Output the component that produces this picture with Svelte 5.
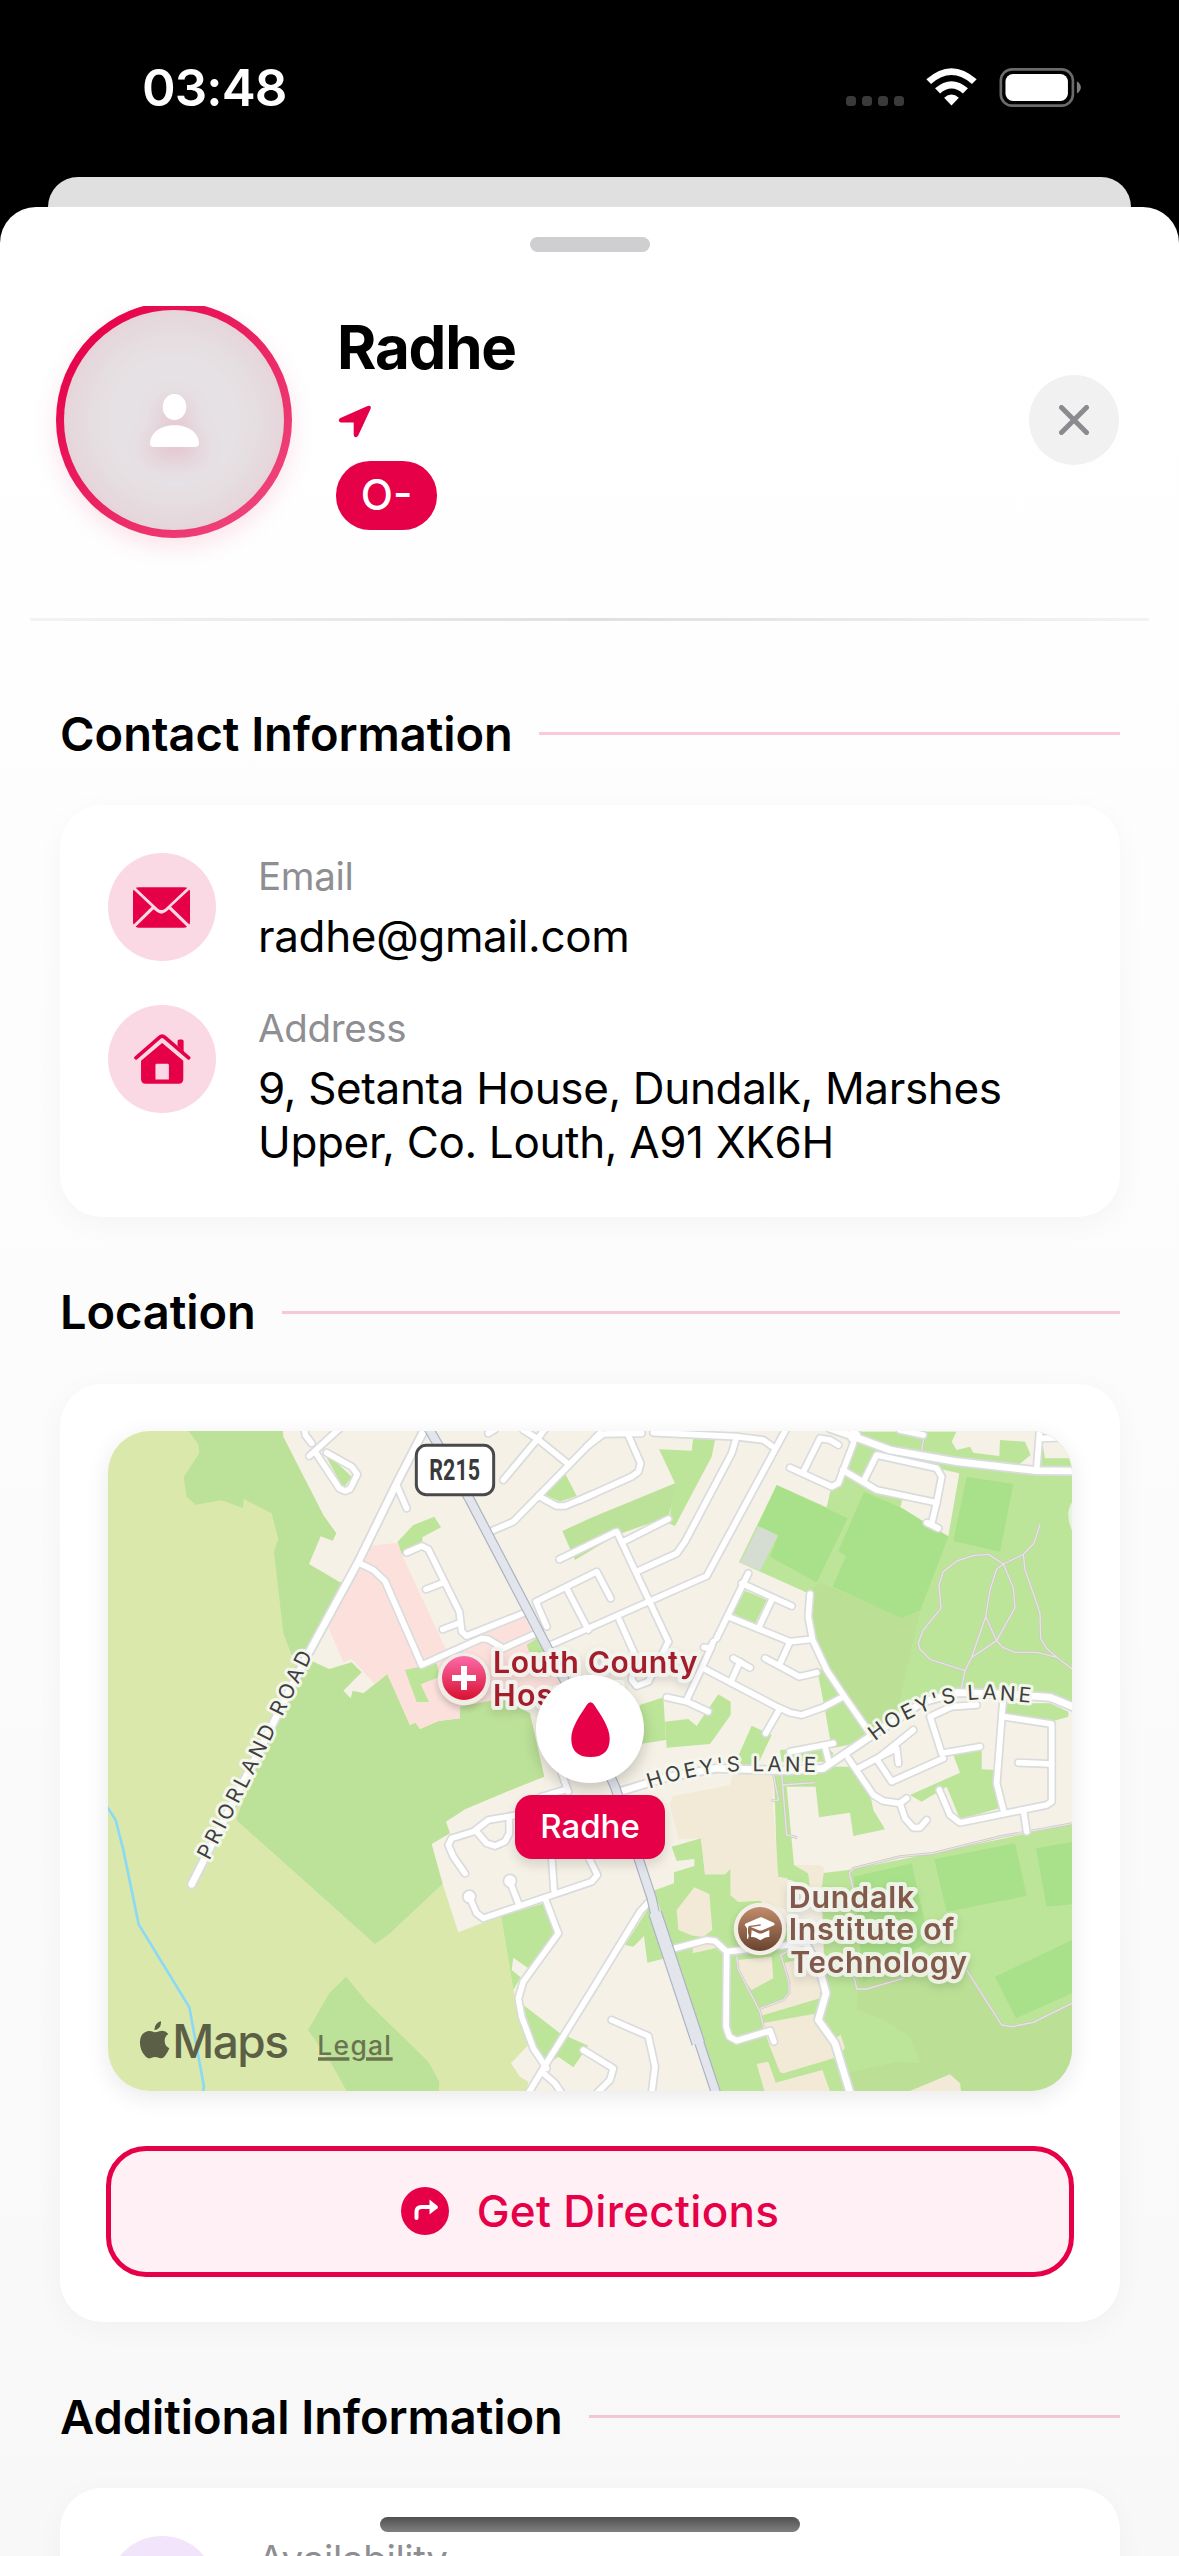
<script>
  // Map drawing units: three per CSS pixel.
  const meadow =
    'M24 33H300L560 300L575 705L640 725L408 1200L825 1573L865 1545L1028 1392L1075 1537L1203 1487L1240 1710L1290 1870L1233 1930L1260 1970L1285 1985L1280 2013H24Z';

  const fields = [
    'M265 33L295 72L298 100L251 172L260 230L287 254L365 241L429 264L431 237L515 280L535 357L522 395L550 640L575 705L620 715L740 480L720 487L627 432L662 349L698 362L709 340L670 285L550 50L549 33Z',
    'M600 705L640 725L688 747L755 727L785 757L730 812L752 835L758 812L790 820L862 762L930 915L947 908L960 927L1015 903L1080 895V855L1200 830L1290 880L1333 1070L1220 1115L1095 1168L1038 1205L1050 1240L995 1272L1028 1392L865 1545L825 1573L408 1200Z',
    'M738 1670L800 1745L985 1925L1018 1985L1016 2013H740L688 1920L624 1830L688 1720Z',
    'M1387 333L1470 295L1725 190L1732 200L1705 290L1550 345L1425 420Z'
  ];

  const parks = [
    'M893 365L940 315L1003 290L1023 322L967 352V370L905 403Z',
    'M665 85L755 170L730 205Z',
    'M1395 160L1430 228L1380 245L1335 225Z',
    'M1677 88L1775 92L1780 52L1845 60L1835 110L1725 318L1705 310L1710 285L1725 190Z',
    'M2270 35H2920V865L2850 832L2710 820L2570 815L2470 845L2310 945L2230 825L2180 750L2138 650L2125 520L1917 427L2030 195L2180 262L2192 210L2228 150L2260 70Z',
    'M1935 512L2000 540L1965 612L1898 580Z',
    'M2150 742L2190 765L2300 940L2270 970L2195 985L2175 870Z',
    'M1620 855L1690 832L1698 960L1600 975Z',
    'M1695 905L1765 897L1790 918L1855 823L1892 845V885L1830 972L1700 983Z',
    'M1955 917L2015 945L1970 1040L1905 1030Z',
    'M2040 990L2180 980L2200 1000L2190 1025L2045 1025Z',
    'M2715 850H2850L2905 875V890L2860 903L2715 885Z',
    'M2560 1005L2645 985V1048L2688 1050L2697 1165L2580 1198L2540 1100L2465 1145L2430 1125L2580 1058Z',
    'M1203 1487L1332 1450L1375 1540L1285 1645L1240 1613L1235 1650L1262 1672L1240 1710Z',
    'M1270 1755L1380 1840L1465 1877L1420 1942L1375 1910L1340 1935L1300 1880Z',
    'M1715 1280L1803 1255L1815 1363H1875L1892 1345V1425L1915 1445L1980 1442L2070 1520L2170 1620L2200 1720L2290 1700V2013H1858L1720 1590L1675 1450L1660 1412L1722 1390V1357L1783 1338V1317L1730 1323Z',
    'M1575 1575L1645 1465H1660L1715 1610L1642 1628L1632 1548L1600 1580Z',
    'M2022 1060L2060 1100L2082 1335L2125 1360L2130 1400L2070 1380L2032 1372Z',
    'M2022 1060L2040 1040H2260L2310 1120L2320 1170L2355 1228L2260 1248L2250 1178L2157 1192L2147 1100H2060Z',
    'M2163 1360L2245 1350L2470 1305L2690 1260L2920 1210V2013H2240L2190 1780L2175 1700Z'
  ];

  const shade = [
    'M2160 487L2405 595L2460 575L2395 860L2310 945L2230 825L2138 650L2125 520Z',
    'M2275 1660H2600L2705 1818L2800 1810L2920 1750V2013H2250L2240 1960L2390 1925L2460 1930L2430 1850L2340 1795L2270 1770Z'
  ];

  const pitches = [
    'M2030 195L2243 295L2150 487L2010 410L2035 345L1973 318Z',
    'M2292 215L2407 265L2545 350L2460 572L2405 595L2198 500L2238 408L2215 393Z',
    'M2600 170L2740 192L2700 395L2560 363Z',
    'M2260 1370L2435 1330L2480 1530L2510 1550L2290 1685Z',
    'M2503 1318L2745 1270L2780 1428L2540 1475Z',
    'M2808 1285L2920 1265V1452L2840 1460Z',
    'M2685 1670L2920 1558V1718L2748 1795Z'
  ];

  const town = [
    'M2290 190L2330 105L2510 145L2578 160L2545 348L2400 265L2407 240L2330 215Z',
    'M2570 33L2555 65L2570 90L2610 80L2620 98L2698 108L2700 60L2775 65L2792 105L2755 135L2810 148L2815 33Z',
    'M2825 55H2920V115H2835Z'
  ];

  const campus = [
    'M1710 1150L1720 1128L1890 1095L1900 1050L2025 1045L2018 1140L2035 1370L2062 1375L2060 1470L1975 1440L1915 1445L1892 1425V1345L1875 1363H1815L1803 1255L1735 1258Z',
    'M1783 1402L1828 1422L1837 1530L1810 1550L1778 1547L1735 1530L1730 1470Z',
    'M1780 1560L1840 1555L1865 1580L1778 1600Z',
    'M1910 1620L2015 1610L2020 1675L1955 1710L1920 1665Z',
    'M2050 1630L2160 1600V1735L1980 1788L1975 1765L2055 1735L2068 1710Z',
    'M1985 1810L2140 1782L2195 1860L2222 1845L2235 1885L2205 1913L2050 1960L2040 1957L2010 1880Z',
    'M1970 1932L2005 1925L2027 1988L2167 1950L2190 2013H1993Z',
    'M2430 2013L2550 1963L2580 1990L2583 2013Z',
    'M2085 1335L2160 1335L2173 1345L2163 1420L2130 1400L2125 1360Z'
  ];

  const roads = [
    'M612 20L616 45L635 70', 'M628 108L725 20',
    'M645 95L718 205L735 213L750 207L772 163L755 140L680 98',
    'M890 195L920 265', 'M1165 40L1185 28', 'M1270 30L1310 55L1400 128', 'M1340 20L1310 60L1210 180',
    'M1500 40L1240 305L1175 333', 'M1315 228L1370 258H1395L1480 222', 'M1378 418L1550 335L1705 665',
    'M775 428L820 450L855 483L965 735L1145 655L1165 658L1210 685L1305 642',
    'M920 398L965 378L985 388L1078 575L1085 635L1100 648L1275 578',
    'M978 508L1030 488', 'M1028 628L1075 610', 'M1340 620L1308 545L1490 455L1532 535', 'M1400 505L1465 630',
    'M1345 678L1820 468L2065 15', 'M1460 80L1510 42L1625 40', 'M1580 35L1622 130L1615 155L1595 170L1440 240',
    'M1660 38L1910 50L1990 60L2015 78', 'M1910 50L1895 100L1755 365L1730 400L1610 455', 'M1570 365L1705 297',
    'M1558 600L1605 705L1595 780L1610 798L1645 785L1705 665',
    'M2070 143L2195 200L2215 190L2260 70', 'M2110 155L2160 55L2190 60L2215 75',
    'M2228 150L2330 210L2510 248', 'M2290 185L2330 105L2510 145L2525 170L2510 248L2495 310', 'M2480 308L2515 325',
    'M1945 460L1850 655', 'M1925 490L2075 558', 'M2015 540L1975 625', 'M1885 590L2070 665L2135 658', 'M2070 665L2038 735',
    'M1995 715L2098 770L2150 758', 'M1812 682L1830 685L1840 665', 'M1835 680L1760 840', 'M1900 715L1950 743', 'M1920 725L1895 780',
    'M1810 745L2030 860L2070 878L2105 885L2170 862L2230 830', 'M2040 865L1997 940', 'M1700 832L1760 845L1825 875',
    'M2130 522L2125 590L2138 660L2180 750L2230 825L2310 940',
    'M2070 995L2200 970', 'M2175 980L2185 1020', 'M2630 855L2555 860L2490 890L2525 1000L2640 980',
    'M2440 930L2340 1010L2275 1045', 'M2245 1015L2320 1125L2350 1143L2400 1150L2420 1135', 'M2400 1150L2415 1195L2440 1223H2460L2480 1200',
    'M2335 1025L2375 1085L2530 1015', 'M2340 1010L2390 985L2395 1030', 'M2710 830L2690 1090L2710 1170', 'M2710 890L2855 912V1145L2840 1155L2580 1208L2550 1185L2518 1110',
    'M2770 1170L2780 1235', 'M2755 1028L2855 1032', 'M2820 20L2810 150', 'M2820 55L2930 52', 'M2400 30L2470 45',
    'M1385 1060L1405 1115', 'M1320 1132L1400 1108',
    'M1400 1160L1165 1200L1120 1235L1055 1255L1045 1275L1060 1310L1095 1360',
    'M1130 1235L1160 1270L1185 1278L1215 1265L1228 1240V1195', 'M1355 1310L1362 1410', 'M1465 1310L1492 1365L1475 1385L1150 1495L1130 1480L1108 1430',
    'M1255 1450L1230 1385', 'M1335 1435L1375 1540L1270 1685L1255 1735L1265 1790L1300 1885L1340 1945', 'M1325 1955L1365 1990L1385 2020',
    'M1645 1448L1620 1475L1470 1720L1330 1945L1285 2020', 'M1535 1800L1645 1848L1665 1940L1655 2020', 'M1450 1890L1540 1945L1530 1980L1490 2020',
    'M1725 1585L1820 1560L1845 1563L1880 1595L2110 1570', 'M1880 1595L1878 1820L1888 1850L1910 1862L2010 1832L2022 1865'
  ];

  const mainRoads = [
    'M980 15L890 190L775 425L620 710L275 1393',
    'M2190 25L2262 50L2370 90L2570 125L2810 152L2930 153',
    'M1560 1115L1700 1072L1850 1045L2050 1052L2170 1045L2310 950L2470 845L2570 818L2710 822L2850 832L2930 865',
    'M2120 1575L2160 1650L2178 1720L2155 1800L2205 1870L2252 2025'
  ];

  const footpaths = [
    'M2820 312L2802 370L2770 403L2710 432L2665 403L2620 407L2570 423L2530 455L2517 495L2523 565L2470 630L2455 668L2460 688L2490 718L2595 752L2583 810',
    'M2710 432L2690 447L2670 510L2657 590L2690 662L2745 563L2740 503L2710 432',
    'M2657 590L2615 712L2595 752M2615 712L2690 662L2710 683L2745 697H2810L2870 712L2918 748',
    'M2770 403L2775 450L2805 535L2820 580L2822 655L2840 685L2870 712', 'M2475 40L2464 92',
    'M2920 1210L2700 1250L2500 1300L2400 1310L2260 1345L2248 1360L2275 1470', 'M2600 1650L2705 1815L2735 1820L2800 1807L2920 1748',
    'M2262 1670L2270 1707H2300L2410 1675', 'M2045 1060L2060 1245L2092 1253M2045 1095L2145 1088', 'M2020 1060L2035 1140L2013 1143',
    'M1910 1610L1915 1650L1980 1775L1990 1820M1980 1765L2050 1740L2067 1720V1685L2042 1605L2070 1590'
  ];

  const highway = 'M980 15L1110 240L1220 450L1340 680L1420 830L1545 1100L1655 1435L1665 1480';
  const highwayWide = 'M1665 1478L1795 1870';
  const highwayEnd = 'M1792 1850L1850 2025';
</script>

<div class="screen">
  <header class="status">
    <span class="time">03:48</span>
    <div class="signals">
      <div class="dots"><i></i><i></i><i></i><i></i></div>
      <svg class="wifi" viewBox="0 0 152 112">
        <path d="M1 33Q76 -33 151 33L137 47Q76 -6 15 47Z" />
        <path d="M27 60Q76 17 125 60L110 75Q76 46 42 75Z" />
        <path d="M54 88Q76 69 98 88L76 111Z" />
      </svg>
      <svg class="battery" viewBox="0 0 248 118">
        <rect x="4" y="4" width="218" height="110" rx="34" fill="none" stroke="#6b6b6b" stroke-width="8" />
        <rect x="18" y="18" width="189" height="82" rx="23" fill="#fff" />
        <path d="M234 40Q246 47 246 58Q246 70 234 77Z" fill="#7d7d7d" />
      </svg>
    </div>
  </header>

  <div class="back-sheet"></div>

  <main class="sheet">
    <div class="grabber"></div>
    <div class="scroll">
      <section class="profile">
        <div class="avatar">
          <div class="face">
            <svg viewBox="0 0 148 160">
              <ellipse cx="74" cy="39" rx="35.500" ry="39.500" />
              <path d="M0 148C2 115 34 94 74 94S146 115 148 148Q148 160 136 160H12Q0 160 0 148Z" />
            </svg>
          </div>
        </div>
        <div class="who">
          <h1>Radhe</h1>
          <svg class="arrow" viewBox="0 0 102 102">
            <path d="M6 40L90 3Q103 -1 99 12L61 94Q57 101 51 99Q47 98 47 92V54H7Q1 53 1 47Q1 43 6 40Z" />
          </svg>
          <span class="badge">O-</span>
        </div>
        <button class="close" aria-label="Close">
          <svg viewBox="0 0 30 30"><path d="M2.500 2.500L27.500 27.500M27.500 2.500L2.500 27.500" /></svg>
        </button>
      </section>
      <div class="divider"></div>

      <div class="heading"><h2>Contact Information</h2><hr /></div>
      <section class="card contact">
        <div class="row">
          <div class="disc">
            <svg class="mail" viewBox="0 0 171 122">
              <path d="M8 2Q12 0 18 0H153Q159 0 163 2L97 64Q85 73 74 64Z" />
              <path d="M0 14Q0 10 2 8L56 59L2 112Q0 110 0 104Z" />
              <path d="M171 14Q171 10 169 8L114 59L169 112Q171 110 171 104Z" />
              <path d="M8 119L62 66L71 74Q85 85 99 74L108 66L162 119Q158 122 153 122H18Q12 122 8 119Z" />
            </svg>
          </div>
          <dl><dt>Email</dt><dd>radhe@gmail.com</dd></dl>
        </div>
        <div class="row">
          <div class="disc">
            <svg class="home" viewBox="0 0 170 149">
              <path d="M84 27L147 80V134Q147 148 133 148H35Q21 148 21 134V80ZM68 89Q64 89 64 93V136H104V93Q104 89 100 89Z" fill-rule="evenodd" />
              <path d="M6 71L76 10Q84 3 92 10L163 71" class="roof" />
              <path d="M130 35V21Q130 16 135 16H143Q148 16 148 21V54Z" />
            </svg>
          </div>
          <dl>
            <dt>Address</dt>
            <dd>9, Setanta House, Dundalk, Marshes<br />Upper, Co. Louth, A91 XK6H</dd>
          </dl>
        </div>
      </section>

      <div class="heading"><h2>Location</h2><hr /></div>
      <section class="card location">
        <div class="map">
          <svg class="tiles" viewBox="24 33 2892 1980">
            <defs>
              <linearGradient id="clinic" x1="0" y1="0" x2="0" y2="1">
                <stop offset="0" stop-color="#fc6ba9" /><stop offset="1" stop-color="#d8102f" />
              </linearGradient>
              <linearGradient id="college" x1="0" y1="0" x2="0" y2="1">
                <stop offset="0" stop-color="#c08c6c" /><stop offset="1" stop-color="#69432f" />
              </linearGradient>
              <path id="priorland" d="M328 1322L477 1030L642 698" />
              <path id="hoeyWest" d="M1648 1106Q1796 1057 1916 1054Q2030 1053 2160 1057" />
              <path id="hoeyEast" d="M2325 964Q2397 905 2487 870Q2587 828 2697 841Q2767 845 2807 851" />
            </defs>
            <rect x="24" y="33" width="2892" height="1980" fill="#f5f1e6" />
            <path d={meadow} fill="#dbe8ab" />
            {#each fields as d}<path {d} fill="#bce198" />{/each}
            <path d="M808 378L893 368L905 403L1037 687L1150 640L1275 590L1340 720L1390 800L1080 860V895L1015 903L960 927L947 908L930 915L862 762L822 790L755 717L730 727L685 620L775 425Z" fill="#fbe0dc" />
            <path d="M915 750L1010 730L1020 770L962 793L987 846H950ZM1280 675L1310 655L1345 720L1300 730Z" fill="#bce599" />
            {#each parks as d}<path {d} fill="#bce599" />{/each}
            {#each shade as d}<path {d} fill="#bbe095" />{/each}
            {#each town as d}<path {d} fill="#f5f1e6" />{/each}
            {#each pitches as d}<path {d} fill="#a9e08a" />{/each}
            {#each campus as d}<path {d} fill="#f2ead7" />{/each}
            <path d="M1975 318L2033 347L1980 452L1920 428Z" fill="#d5ddd2" />
            <path d="M2920 240Q2890 280 2920 340Z" fill="#e6f4df" />
            <path d="M18 1155L47 1200L70 1290L116 1513L268 1762L312 2000L308 2020" fill="none" stroke="#8bd9f5" stroke-width="8" />

            <g fill="none" stroke-linejoin="round">
              {#each footpaths as d}<path {d} stroke="#cbc9c6" stroke-width="8" />{/each}
              {#each footpaths as d}<path {d} stroke="#e8e4e1" stroke-width="4" />{/each}
            </g>
            <g fill="none" stroke-linecap="round" stroke-linejoin="round">
              <g stroke="#dadbdd">
                {#each roads as d}<path {d} stroke-width="27" />{/each}
                {#each mainRoads as d}<path {d} stroke-width="31" />{/each}
                <circle cx="1108" cy="1430" r="9" stroke-width="27" />
                <circle cx="1230" cy="1383" r="9" stroke-width="27" />
                <circle cx="2262" cy="48" r="11" stroke-width="27" />
              </g>
              <g stroke="#fff">
                {#each roads as d}<path {d} stroke-width="17" />{/each}
                {#each mainRoads as d}<path {d} stroke-width="20" />{/each}
                <circle cx="1108" cy="1430" r="10" stroke-width="14" />
                <circle cx="1230" cy="1383" r="10" stroke-width="14" />
                <circle cx="2262" cy="48" r="12" stroke-width="14" />
              </g>
            </g>
            <g fill="none" stroke-linejoin="round">
              <path d={highway} stroke="#abb2c2" stroke-width="31" />
              <path d={highwayEnd} stroke="#abb2c2" stroke-width="31" />
              <path d={highwayWide} stroke="#abb2c2" stroke-width="42" />
              <path d={highway} stroke="#e3e5ed" stroke-width="24" />
              <path d={highwayEnd} stroke="#e3e5ed" stroke-width="24" />
              <path d={highwayWide} stroke="#e3e5ed" stroke-width="35" />
            </g>

            <rect x="949" y="76" width="232" height="148" rx="30" fill="#fff" stroke="#49494b" stroke-width="9" />
            <text class="shield" x="988" y="180" textLength="152" lengthAdjust="spacingAndGlyphs">R215</text>

            <text class="street"><textPath href="#priorland" textLength="690">PRIORLAND ROAD</textPath></text>
            <text class="street"><textPath href="#hoeyWest" textLength="506">HOEY'S LANE</textPath></text>
            <text class="street"><textPath href="#hoeyEast" textLength="496">HOEY'S LANE</textPath></text>

            <g class="poi">
              <circle cx="1092" cy="777" r="79" fill="#f1ece6" />
              <circle cx="1092" cy="774" r="66" fill="url(#clinic)" />
              <path d="M1092 738V810M1056 774H1128" stroke="#fff" stroke-width="18" />
            </g>
            <g class="place clinic">
              <text x="1179" y="758" textLength="614">Louth County</text>
              <text x="1179" y="857" textLength="389">Hospital</text>
            </g>

            <g class="poi">
              <circle cx="1980" cy="1527" r="79" fill="#f4efe6" />
              <circle cx="1980" cy="1527" r="66" fill="url(#college)" />
              <path d="M1934 1515Q1934 1512 1939 1510L1977 1493Q1981 1491 1985 1492L2021 1508Q2027 1512 2022 1516L1989 1530Q1981 1533 1974 1530L1952 1521L1982 1517V1513L1946 1518L1944 1525V1540Q1948 1548 1944 1556H1941V1525ZM1955 1530L1974 1539Q1981 1542 1989 1539L2008 1530V1551Q1998 1549 1981 1561Q1965 1549 1953 1551Z" fill="#fff" />
            </g>
            <g class="place college">
              <text x="2066" y="1463" textLength="377">Dundalk</text>
              <text x="2066" y="1561" textLength="497">Institute of</text>
              <text x="2071" y="1658" textLength="530">Technology</text>
            </g>

            <g class="brand">
              <path d="M183 1804Q184 1818 176 1825Q170 1831 163 1830Q163 1817 170 1811Q176 1805 183 1804ZM164 1837Q170 1837 178 1834Q194 1829 205 1842Q193 1850 194 1864Q195 1879 208 1885Q203 1898 195 1908Q188 1917 178 1914Q165 1908 153 1914Q144 1918 136 1909Q118 1888 120 1863Q122 1838 144 1833Q152 1832 164 1837Z" />
              <text class="logo" x="217" y="1915" textLength="350">Maps</text>
              <text class="legal" x="652" y="1905" textLength="221">Legal</text>
              <path d="M654 1912H748V1922H654ZM798 1912H878V1922H798Z" class="rule" />
            </g>
          </svg>
          <div class="pin">
            <svg viewBox="0 0 116 166"><path d="M46 10Q58 -9 70 10C88 38 116 76 116 110Q116 166 58 166Q0 166 0 110C0 76 28 38 46 10Z" /></svg>
          </div>
          <div class="tag">Radhe</div>
        </div>
        <button class="directions">
          <svg viewBox="0 0 48 48">
            <circle cx="24" cy="24" r="24" />
            <path d="M15.500 31V25Q15.500 20 20.500 20H29" class="turn" />
            <path d="M28.500 12.500L36.500 19Q37.500 20.200 36.500 21.200L28.500 27.500Z" class="tip" />
          </svg>
          <span>Get Directions</span>
        </button>
      </section>

      <div class="heading"><h2>Additional Information</h2><hr /></div>
      <section class="card extra">
        <div class="row">
          <div class="disc violet"></div>
          <dl><dt>Availability</dt></dl>
        </div>
      </section>
    </div>
  </main>
  <div class="home-bar"></div>
</div>

<style>
  :global(body) { margin: 0; background: #000; }
  .screen {
    --accent: #e60048;
    position: relative;
    width: 1179px;
    height: 2556px;
    overflow: hidden;
    background: #000;
    font-family: Inter, "Liberation Sans", sans-serif;
    color: #000;
  }
  h1, h2, dl, dt, dd, hr { margin: 0; border: 0; padding: 0; }
  button { border: 0; padding: 0; font: inherit; }
  svg { display: block; }

  .status {
    box-sizing: border-box;
    height: 177px;
    padding: 58px 97px 0 142px;
    display: flex;
    justify-content: space-between;
    align-items: flex-start;
    color: #fff;
  }
  .time { font-size: 51px; font-weight: 600; line-height: 60px; letter-spacing: -0.900px; }
  .signals { display: flex; align-items: flex-start; padding-top: 10px; }
  .dots { display: flex; gap: 6px; padding-top: 28px; margin-right: 22px; }
  .dots i { width: 10px; height: 10px; border-radius: 3.500px; background: #3a3a3a; }
  .wifi { width: 51px; height: 38px; fill: #fff; margin-right: 22px; }
  .battery { width: 83px; height: 39px; }

  .back-sheet { height: 30px; margin: 0 48px; background: #e0e0e0; border-radius: 30px 30px 0 0; }
  .sheet {
    height: 2349px;
    border-radius: 36px 36px 0 0;
    background: linear-gradient(#fff, #fefefe 18%, #f8f8f8);
    overflow: hidden;
  }
  .grabber { width: 120px; height: 15px; margin: 30px auto 54px; border-radius: 8px; background: #cfcfd1; }
  .scroll { height: 2250px; overflow: hidden; }

  .profile { height: 228px; padding: 0 60px 0 56px; display: flex; align-items: center; }
  .avatar {
    box-sizing: border-box;
    width: 236px;
    height: 236px;
    margin: -4px 44px -4px 0;
    padding: 8px;
    flex: none;
    border-radius: 50%;
    background: linear-gradient(135deg, #e60048 10%, #f04a80 95%);
    box-shadow: 0 9px 24px rgba(230, 0, 72, 0.11);
  }
  .face {
    width: 220px;
    height: 220px;
    border-radius: 50%;
    background: #e6e1e4;
    box-shadow: inset 0 0 48px rgba(230, 0, 72, 0.1);
    display: flex;
    align-items: center;
    justify-content: center;
  }
  .face svg { width: 49px; height: 53px; fill: #fff; filter: drop-shadow(0 9px 12px rgba(230, 0, 72, 0.18)); }
  .who { display: flex; flex-direction: column; align-items: flex-start; flex: 1; }
  h1 { font-size: 60px; line-height: 72px; font-weight: 700; letter-spacing: -1.200px; padding-left: 1px; }
  .arrow { width: 34px; height: 33px; margin: 22px 0 23px 2px; fill: var(--accent); }
  .badge {
    box-sizing: border-box;
    width: 101px;
    height: 69px;
    border-radius: 34px;
    background: var(--accent);
    color: #fff;
    font-size: 42px;
    font-weight: 500;
    line-height: 68px;
    text-align: center;
  }
  .close {
    width: 90px;
    height: 90px;
    border-radius: 50%;
    background: #f1f1f1;
    display: flex;
    align-items: center;
    justify-content: center;
  }
  .close svg { width: 30px; height: 30px; fill: none; stroke: #8b8b8f; stroke-width: 5; stroke-linecap: round; }
  .divider { height: 3px; margin: 84px 30px 0; background: linear-gradient(90deg, #f3f3f3, #e0e0e0, #f3f3f3); }

  .heading { display: flex; align-items: center; gap: 26px; height: 60px; margin: 65px 59px 41.500px 60px; }
  .divider + .heading { margin-top: 82.500px; }
  h2 { font-size: 47px; line-height: 60px; font-weight: 600; letter-spacing: -0.060px; white-space: nowrap; }
  hr { flex: 1; height: 3px; background: rgba(230, 0, 72, 0.2); }

  .card {
    box-sizing: border-box;
    margin: 0 59px 0 60px;
    padding: 48px;
    border-radius: 42px;
    background: #fff;
    box-shadow: 0 6px 30px rgba(0, 0, 0, 0.035);
  }
  .contact { height: 412px; display: flex; flex-direction: column; gap: 42px; }
  .row { display: flex; gap: 42px; align-items: flex-start; min-height: 110px; }
  .disc {
    width: 108px;
    height: 108px;
    flex: none;
    border-radius: 50%;
    background: #fad9e4;
    display: flex;
    align-items: center;
    justify-content: center;
  }
  .violet { background: #f2e5fb; }
  .mail { width: 57px; height: 41px; fill: var(--accent); margin-right: 1px; }
  .home { width: 57px; height: 50px; fill: var(--accent); }
  .home .roof { fill: none; stroke: var(--accent); stroke-width: 11; stroke-linecap: round; }
  dl { margin-top: -1px; }
  dt { font-size: 38.500px; line-height: 48px; letter-spacing: -0.350px; color: #8e8e93; }
  dd { margin-top: 8.500px; font-size: 44px; line-height: 54px; letter-spacing: -0.350px; white-space: nowrap; }

  .location { height: 938px; padding: 47.500px 48px 45px; }
  .map {
    position: relative;
    width: 964px;
    height: 660px;
    border-radius: 42px;
    overflow: hidden;
    box-shadow: 0 6px 24px rgba(0, 0, 0, 0.09);
  }
  .tiles { width: 964px; height: 660px; }
  .shield { font: 700 88px Roboto, sans-serif; fill: #39393b; }
  .street, .place text {
    paint-order: stroke;
    stroke-linejoin: round;
  }
  .street { font-size: 62px; font-weight: 400; fill: #3f3f3f; stroke: rgba(246, 248, 240, 0.94); stroke-width: 18; }
  .place { filter: drop-shadow(0 12px 12px rgba(0, 0, 0, 0.12)); }
  .place text { font-size: 91px; font-weight: 600; stroke: rgba(244, 245, 240, 0.88); stroke-width: 24; }
  .clinic { fill: #a31d2b; }
  .college { fill: #82594a; }
  .poi { filter: drop-shadow(0 10px 10px rgba(0, 0, 0, 0.2)); }
  .brand { fill: #5a5f45; }
  .logo { font-size: 138px; font-weight: 500; }
  .legal { font-size: 79px; font-weight: 500; fill: #6a7550; }
  .rule { fill: #6a7550; }
  .pin {
    position: absolute;
    left: 428px;
    top: 244px;
    width: 108px;
    height: 108px;
    border-radius: 50%;
    background: #fff;
    box-shadow: 0 6px 15px rgba(0, 0, 0, 0.2);
    display: flex;
    align-items: center;
    justify-content: center;
  }
  .pin svg { width: 39px; height: 55px; fill: var(--accent); }
  .tag {
    position: absolute;
    left: 407px;
    top: 364px;
    width: 150px;
    height: 64px;
    border-radius: 17px;
    background: var(--accent);
    color: #fff;
    font-size: 33px;
    font-weight: 500;
    line-height: 62px;
    text-align: center;
    box-shadow: 0 6px 12px rgba(0, 0, 0, 0.12);
  }
  .directions {
    box-sizing: border-box;
    width: 968px;
    height: 131px;
    margin: 54.500px -2px 0;
    border: 5px solid var(--accent);
    border-radius: 40px;
    background: #fef0f4;
    color: var(--accent);
    font-size: 44px;
    font-weight: 500;
    letter-spacing: 0.300px;
    display: flex;
    align-items: center;
    justify-content: center;
    gap: 28px;
  }
  .directions svg { width: 48px; height: 48px; fill: var(--accent); }
  .directions .turn { fill: none; stroke: #fff; stroke-width: 4; stroke-linecap: round; }
  .directions .tip { fill: #fff; }

  .extra { height: 300px; }
  .home-bar {
    position: absolute;
    left: 380px;
    top: 2517px;
    width: 420px;
    height: 15px;
    border-radius: 8px;
    background: linear-gradient(#505050, #808080);
  }
</style>
